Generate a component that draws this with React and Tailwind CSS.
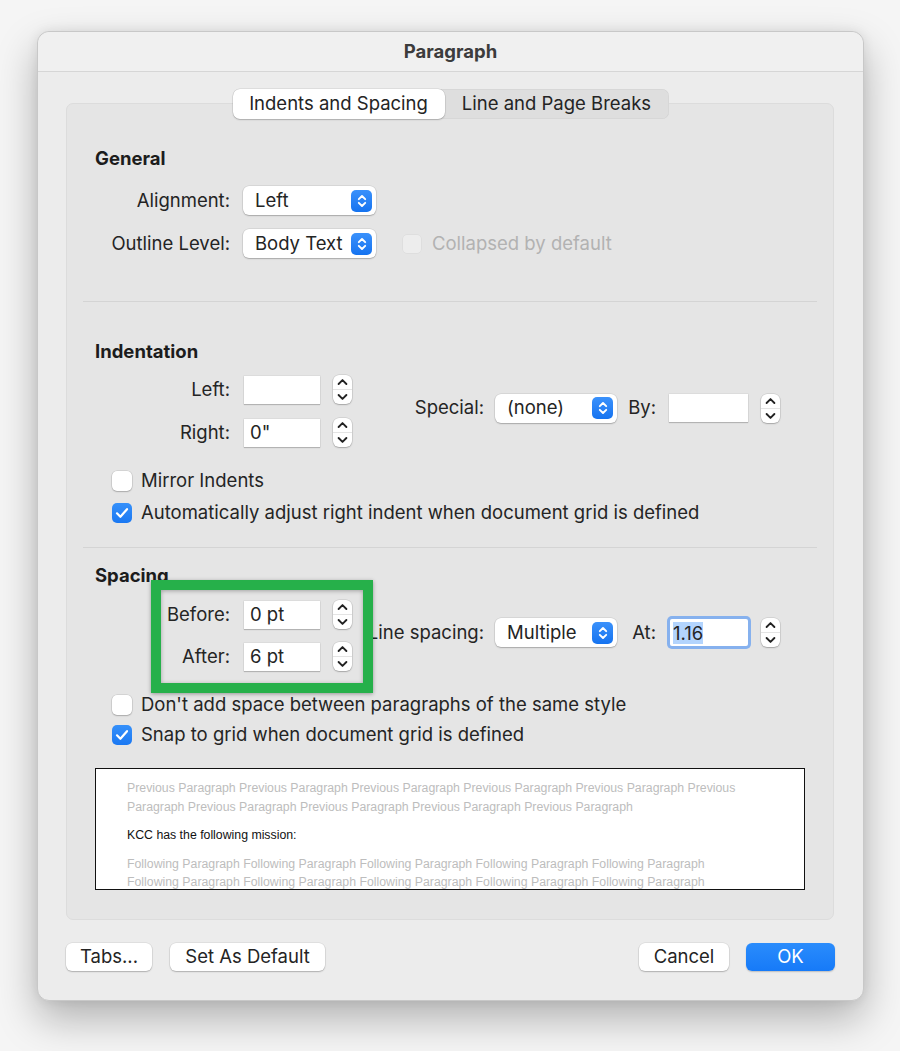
import React from "react";

const SelectIcon = () => (
  <span className="flex h-[22px] w-[21px] items-center justify-center rounded-[5px] bg-linear-to-b from-[#3a91fb] to-[#1473f0]">
    <svg width="12" height="16" viewBox="0 0 12 16" fill="none" stroke="white" strokeWidth="1.9" strokeLinecap="round" strokeLinejoin="round">
      <path d="M2.8 6.2 L6 3 L9.2 6.2" />
      <path d="M2.8 9.8 L6 13 L9.2 9.8" />
    </svg>
  </span>
);

const Select = ({ value, className }) => (
  <div className={`flex h-[29px] items-center justify-between rounded-[6px] bg-white pl-[12px] pr-[4px] shadow-[0_0_0_0.5px_rgba(0,0,0,0.12),0_1px_1.5px_rgba(0,0,0,0.22)] ${className}`}>
    <span>{value}</span>
    <SelectIcon />
  </div>
);

const Stepper = ({ className = "" }) => (
  <div className={`flex h-[29px] w-[19px] flex-col rounded-[6px] bg-white shadow-[0_0_0_0.5px_rgba(0,0,0,0.14),0_1px_1.5px_rgba(0,0,0,0.22)] ${className}`}>
    <div className="flex flex-1 items-center justify-center border-b border-[#e4e4e4]">
      <svg width="11" height="8" viewBox="0 0 11 8" fill="none" stroke="#222" strokeWidth="1.9" strokeLinecap="round" strokeLinejoin="round">
        <path d="M1.6 6 L5.5 2.1 L9.4 6" />
      </svg>
    </div>
    <div className="flex flex-1 items-center justify-center">
      <svg width="11" height="8" viewBox="0 0 11 8" fill="none" stroke="#222" strokeWidth="1.9" strokeLinecap="round" strokeLinejoin="round">
        <path d="M1.6 2 L5.5 5.9 L9.4 2" />
      </svg>
    </div>
  </div>
);

const Input = ({ value, className = "" }) => (
  <div className={`flex h-[28px] items-center bg-white px-[6px] shadow-[0_0_0_0.5px_rgba(0,0,0,0.08),0_1px_1px_rgba(0,0,0,0.18)] ${className}`}>
    {value}
  </div>
);

const Check = ({ checked }) =>
  checked ? (
    <span className="flex h-[20px] w-[20px] shrink-0 items-center justify-center rounded-[5px] bg-linear-to-b from-[#3590fa] to-[#1a78f2]">
      <svg width="14" height="12" viewBox="0 0 14 12" fill="none" stroke="white" strokeWidth="2.2" strokeLinecap="round" strokeLinejoin="round">
        <path d="M2 6.3 L5.4 9.8 L12 2.2" />
      </svg>
    </span>
  ) : (
    <span className="h-[20px] w-[20px] shrink-0 rounded-[5px] bg-white shadow-[0_0_0_0.5px_rgba(0,0,0,0.14),0_1px_1.5px_rgba(0,0,0,0.2)]" />
  );

const CheckRow = ({ checked, children, className = "" }) => (
  <div className={`ml-[45px] flex h-[20px] items-center ${className}`}>
    <Check checked={checked} />
    <span className="ml-[9px]">{children}</span>
  </div>
);

const LabeledInput = ({ label, value }) => (
  <div className="flex h-[29px] items-center">
    <span className="w-[135px] text-right">{label}</span>
    <Input value={value} className="ml-[14px] w-[76px]" />
    <Stepper className="ml-[13px]" />
  </div>
);

const Heading = ({ children, className = "" }) => (
  <div className={`h-[22px] px-[28px] text-[18.5px] font-bold leading-[22px] text-[#1c1c1c] ${className}`}>{children}</div>
);

const Sep = ({ className = "" }) => <div className={`mx-[16px] h-px bg-[#d4d4d4] ${className}`} />;

const Button = ({ children, className = "" }) => (
  <div className={`flex h-[28px] items-center justify-center rounded-[6px] bg-white shadow-[0_0_0_0.5px_rgba(0,0,0,0.1),0_1px_1.5px_rgba(0,0,0,0.22)] ${className}`}>
    {children}
  </div>
);

const prev = "Previous Paragraph Previous Paragraph Previous Paragraph Previous Paragraph Previous Paragraph Previous";
const prev2 = "Paragraph Previous Paragraph Previous Paragraph Previous Paragraph Previous Paragraph";
const foll = "Following Paragraph Following Paragraph Following Paragraph Following Paragraph Following Paragraph";

export default function App() {
  return (
    <div className="min-h-[1051px] w-[900px] bg-[#f5f5f5] pl-[37px] pt-[31px] font-['Inter',sans-serif] text-[18.5px] text-[#242424]">
      <div className="flex w-[827px] flex-col rounded-[12px] border border-[#c8c8c8] bg-[#ececec] shadow-[0_18px_40px_rgba(0,0,0,0.28),0_0_12px_rgba(0,0,0,0.08)]">
        <div className="flex h-[40px] items-center justify-center rounded-t-[12px] border-b border-[#d6d6d6] bg-[#f0f0f0] text-[18.5px] font-bold text-[#3c3c3c]">
          Paragraph
        </div>

        <div className="relative z-10 -mb-[16px] mt-[17px] flex h-[30px] self-center rounded-[7px] bg-[#dedede] shadow-[inset_0_0_0_0.5px_rgba(0,0,0,0.06)]">
          <div className="flex w-[212px] items-center justify-center rounded-[7px] bg-white shadow-[0_0_0_0.5px_rgba(0,0,0,0.12),0_1px_1.5px_rgba(0,0,0,0.2)]">
            Indents and Spacing
          </div>
          <div className="flex w-[224px] items-center justify-center">Line and Page Breaks</div>
        </div>

        <div className="relative ml-[28px] flex w-[768px] flex-col rounded-[7px] border border-[#dcdcdc] bg-[#e5e5e5] pb-[29px] pt-[43px]">
          <Heading>General</Heading>
          <div className="mt-[17px] flex h-[29px] items-center px-[28px]">
            <span className="w-[135px] text-right">Alignment:</span>
            <Select value="Left" className="ml-[13px] w-[133px]" />
          </div>
          <div className="mt-[14px] flex h-[29px] items-center px-[28px]">
            <span className="w-[135px] text-right">Outline Level:</span>
            <Select value="Body Text" className="ml-[13px] w-[133px]" />
            <span className="ml-[27px] h-[18px] w-[18px] rounded-[4px] bg-[#ededed] shadow-[0_0_0_0.5px_rgba(0,0,0,0.06)]" />
            <span className="ml-[11px] text-[#b2b2b2]">Collapsed by default</span>
          </div>

          <Sep className="mt-[43px]" />

          <Heading className="mt-[38px]">Indentation</Heading>
          <div className="mt-[13px] flex items-start px-[28px]">
            <div className="flex flex-col gap-[14px]">
              <LabeledInput label="Left:" value="" />
              <LabeledInput label="Right:" value={'0"'} />
            </div>
            <div className="ml-[12px] mt-[19px] flex h-[28px] items-center">
              <span className="w-[120px] text-right">Special:</span>
              <Select value="(none)" className="ml-[11px] w-[122px]" />
              <span className="ml-[11px] w-[28px] text-right">By:</span>
              <Input value="" className="ml-[13px] w-[79px]" />
              <Stepper className="ml-[13px]" />
            </div>
          </div>

          <CheckRow className="mt-[24px]">Mirror Indents</CheckRow>
          <CheckRow checked className="mt-[12px]">
            Automatically adjust right indent when document grid is defined
          </CheckRow>

          <Sep className="mt-[24px]" />

          <Heading className="mt-[16px]">Spacing</Heading>
          <div className="mt-[14px] flex items-start px-[28px]">
            <div className="flex flex-col gap-[13px]">
              <LabeledInput label="Before:" value="0 pt" />
              <LabeledInput label="After:" value="6 pt" />
            </div>
            <div className="ml-[12px] mt-[18px] flex h-[29px] items-center">
              <span className="w-[120px] whitespace-nowrap text-right">Line spacing:</span>
              <Select value="Multiple" className="ml-[11px] w-[122px]" />
              <span className="ml-[11px] w-[28px] text-right">At:</span>
              <div className="ml-[14px] flex h-[27px] w-[78px] items-center rounded-[2px] bg-white px-[3px] ring-[3px] ring-[#86b1ee]">
                <span className="bg-[#b3d4fd] leading-[22px]">1.16</span>
              </div>
              <Stepper className="ml-[13px]" />
            </div>
          </div>

          <CheckRow className="mt-[24px]">Don't add space between paragraphs of the same style</CheckRow>
          <CheckRow checked className="mt-[10px]">Snap to grid when document grid is defined</CheckRow>

          <div className="mx-[28px] mt-[23px] h-[122px] overflow-hidden border-[1.5px] border-[#111] bg-white pl-[31px] pt-[10px] font-['Liberation_Sans',sans-serif] text-[12.3px] leading-[19px] whitespace-nowrap">
            <div className="text-[#bdbdbd]">{prev}</div>
            <div className="text-[#bdbdbd]">{prev2}</div>
            <div className="mt-[9px] text-[#111]">KCC has the following mission:</div>
            <div className="mt-[10px] text-[#bdbdbd]">{foll}</div>
            <div className="-mt-px text-[#bdbdbd]">{foll}</div>
          </div>

          <div className="absolute left-[84px] top-[476px] h-[113px] w-[222px] border-[10px] border-[#26b04a] shadow-[0_1px_4px_rgba(0,0,0,0.35),inset_0_1px_4px_rgba(0,0,0,0.3)]" />
        </div>

        <div className="mb-[29px] mt-[23px] flex items-center px-[28px]">
          <Button className="w-[86px]">Tabs...</Button>
          <Button className="ml-[18px] w-[155px]">Set As Default</Button>
          <div className="flex-1" />
          <Button className="w-[90px]">Cancel</Button>
          <div className="ml-[17px] flex h-[28px] w-[89px] items-center justify-center rounded-[6px] bg-linear-to-b from-[#2a8cfc] to-[#167af8] text-white shadow-[0_1px_1.5px_rgba(0,0,0,0.2)]">
            OK
          </div>
        </div>
      </div>
    </div>
  );
}
